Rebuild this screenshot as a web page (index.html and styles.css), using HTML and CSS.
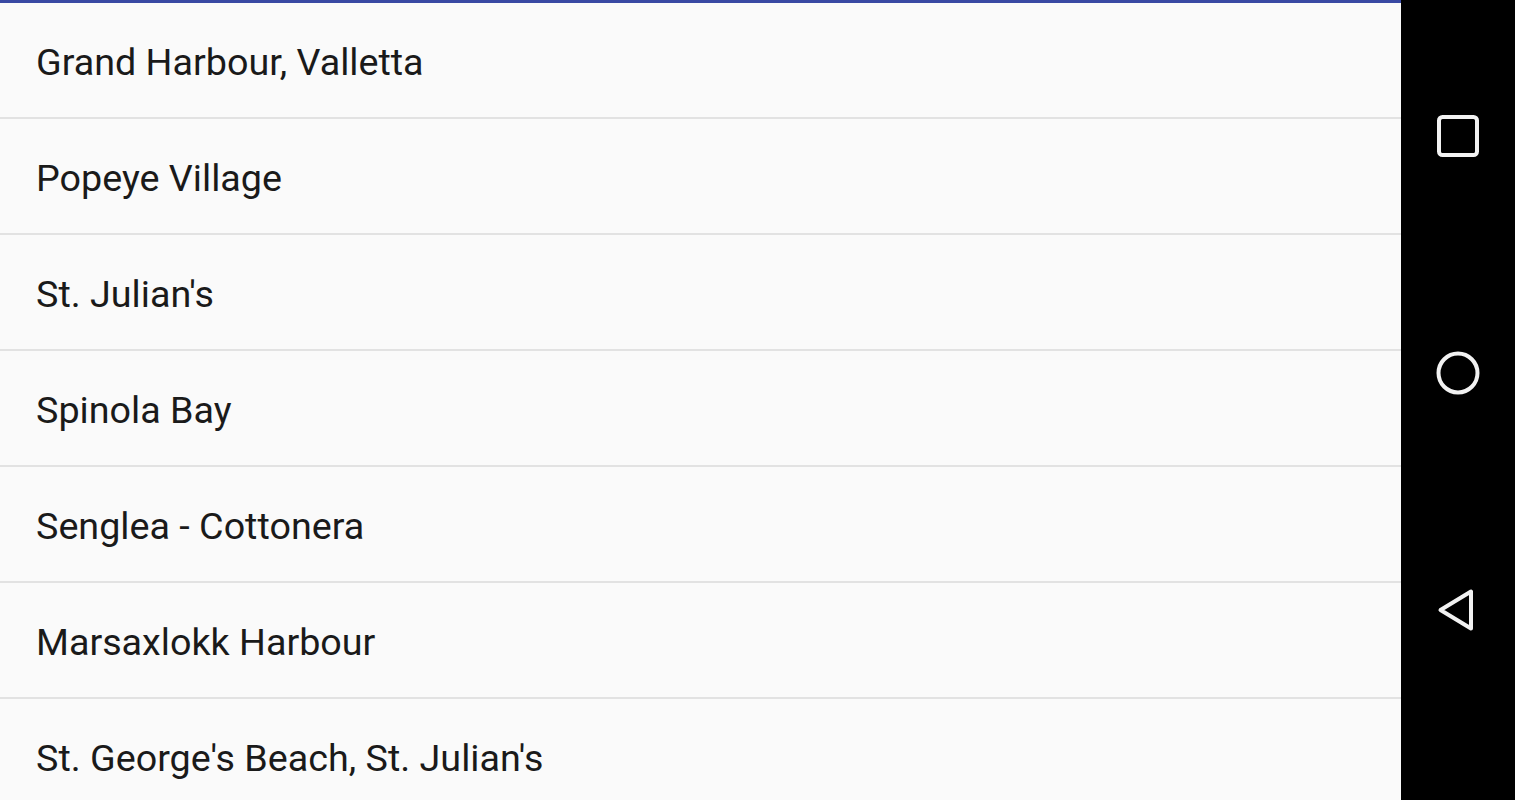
FILE: index.html
```html
<!DOCTYPE html>
<html>
<head>
<meta charset="utf-8">
<link rel="stylesheet" href="styles.css">
</head>
<body>
<div class="screen">
  <main class="app">
    <div class="topbar"></div>
    <ul class="list">
      <li class="item">Grand Harbour, Valletta</li>
      <li class="item">Popeye Village</li>
      <li class="item">St. Julian's</li>
      <li class="item">Spinola Bay</li>
      <li class="item">Senglea - Cottonera</li>
      <li class="item">Marsaxlokk Harbour</li>
      <li class="item">St. George's Beach, St. Julian's</li>
    </ul>
  </main>
  <nav class="navbar">
    <div class="navbtn">
      <svg width="48" height="48" viewBox="0 0 48 48"><rect x="5" y="5" width="38" height="38" rx="3.5" fill="none" stroke="#f2f2f2" stroke-width="4"/></svg>
    </div>
    <div class="navbtn">
      <svg width="48" height="48" viewBox="0 0 48 48"><circle cx="24" cy="24" r="19.5" fill="none" stroke="#f2f2f2" stroke-width="4"/></svg>
    </div>
    <div class="navbtn">
      <svg width="48" height="48" viewBox="0 0 48 48"><path d="M37 5.5 L37 42.5 L6.5 24 Z" fill="none" stroke="#f2f2f2" stroke-width="4" stroke-linejoin="round"/></svg>
    </div>
  </nav>
</div>
</body>
</html>
```
FILE: styles.css
```css
html, body {
  margin: 0;
  padding: 0;
  height: 100%;
  overflow: hidden;
}
body {
  font-family: Roboto, "Liberation Sans", sans-serif;
  background: #000;
}
.screen {
  display: flex;
  width: 1515px;
  height: 800px;
}
.app {
  width: 1401px;
  background: #fafafa;
  display: flex;
  flex-direction: column;
  overflow: hidden;
}
.topbar {
  height: 3px;
  background: #3949a3;
  flex: none;
}
.list {
  list-style: none;
  margin: 0;
  padding: 0;
}
.item {
  box-sizing: content-box;
  height: 110px;
  padding-top: 4px;
  border-bottom: 2px solid #e2e2e2;
  display: flex;
  align-items: center;
  padding-left: 36px;
  font-size: 37.7px;
  color: #1a1a1a;
}
.navbar {
  width: 114px;
  background: #000;
  display: flex;
  flex-direction: column;
  align-items: center;
  padding-top: 112px;
  gap: 189px;
  box-sizing: border-box;
}
.navbtn {
  width: 48px;
  height: 48px;
  display: flex;
  align-items: center;
  justify-content: center;
}
.navbtn svg {
  display: block;
}
```
